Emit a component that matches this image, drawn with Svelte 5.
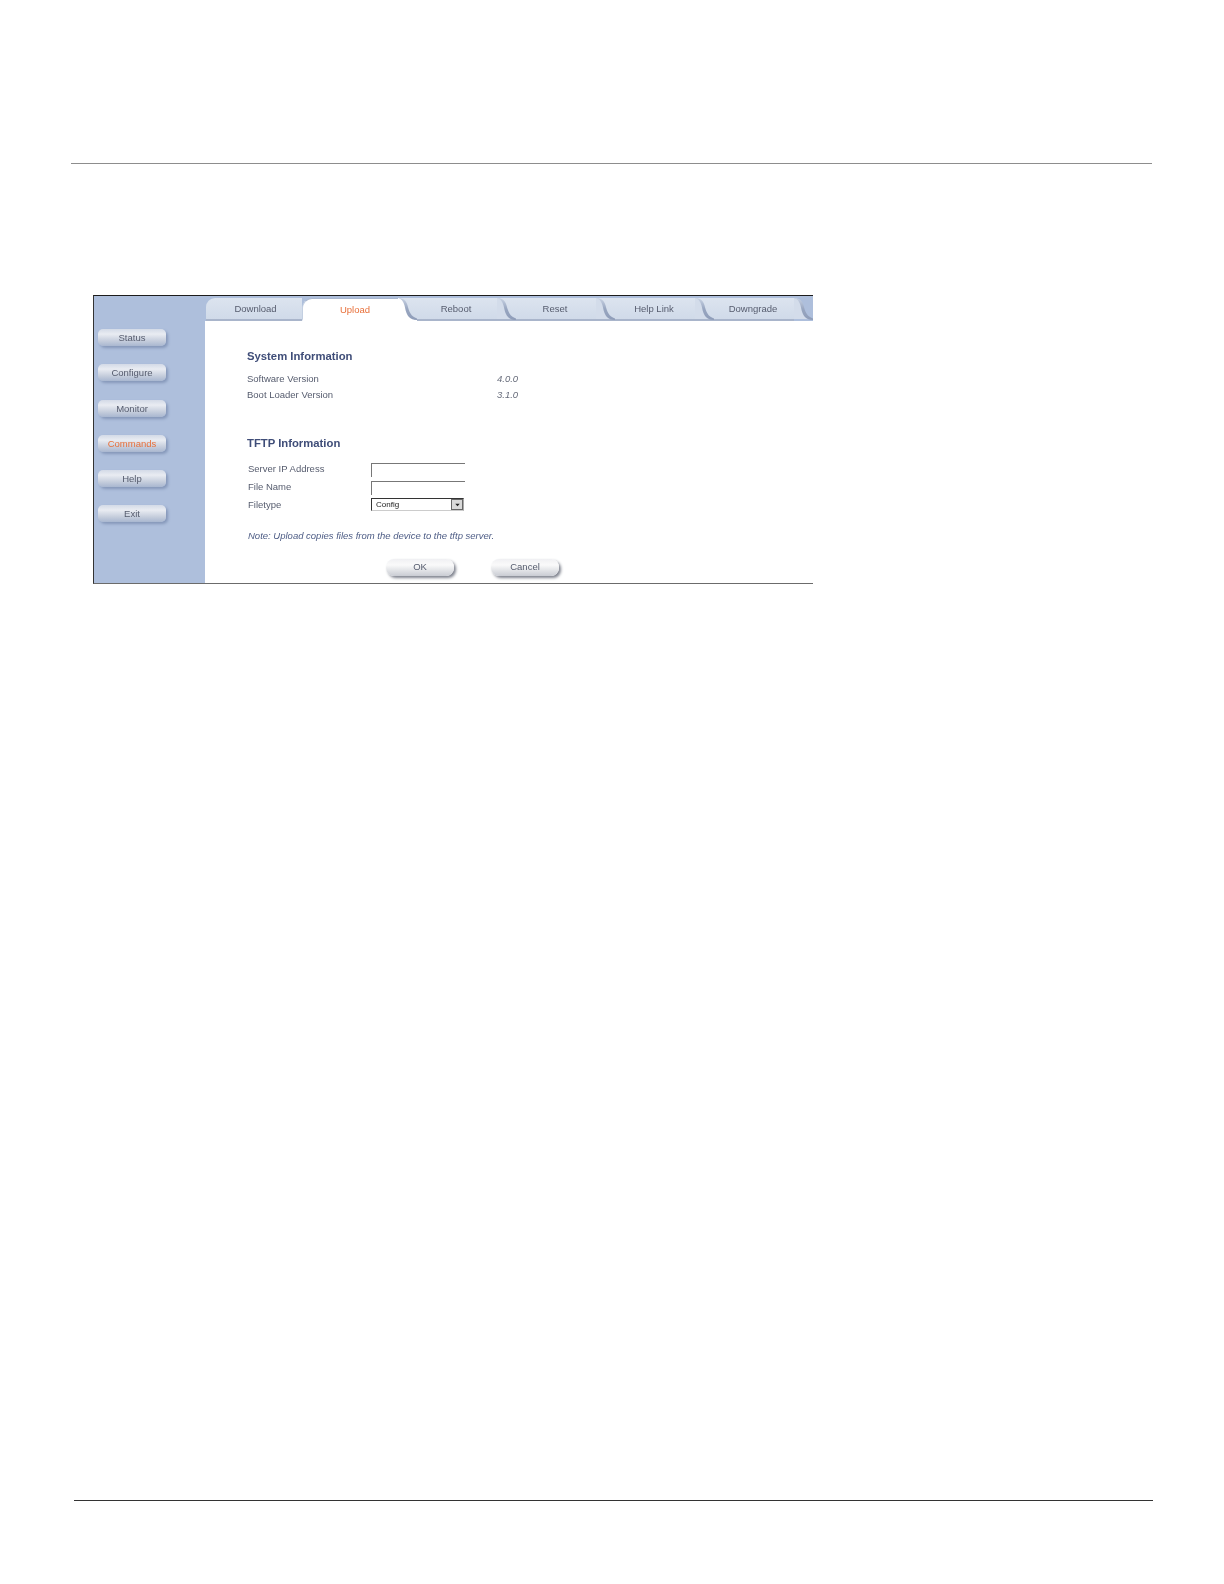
<script>
  const nav = ['Status', 'Configure', 'Monitor', 'Commands', 'Help', 'Exit']
  const tabs = ['Download', 'Upload', 'Reboot', 'Reset', 'Help Link', 'Downgrade']
  const active = 'Upload'
  const current = 'Commands'
</script>

<div class="page">
  <hr class="top-rule" />

  <div class="shot">
    <aside class="side">
      {#each nav as item}
        <div class="nav-btn" class:on={item === current}>{item}</div>
      {/each}
    </aside>

    <main class="main">
      <div class="tabs">
        {#each tabs as tab, i}
          <div class="tab" class:on={tab === active} class:first={i === 0}>
            <span>{tab}</span>
            {#if i > 0}
              <svg class="swoosh" viewBox="0 0 19 22" width="19" height="23" preserveAspectRatio="none" aria-hidden="true">
                <defs>
                  <linearGradient id="sw{i}" x1="0" y1="0" x2="0" y2="1">
                    <stop offset="0" stop-color="#c9d3e4" />
                    <stop offset="0.5" stop-color="#98a6c0" />
                    <stop offset="1" stop-color="#8f9db9" />
                  </linearGradient>
                </defs>
                <path d={tab === active ? 'M0 0 C5 1 7 4 8 9 C9 15 12 20 19 21 L19 22 L0 22 Z' : 'M0 0 C5 1 7 4 8 9 C9 15 12 19 19 20 L0 20 Z'} fill={tab === active ? '#fff' : '#d3dcea'} />
                <path d="M0 0 C5 0 8 2 9.5 7 C11 13 13 18 19 19.5 L19 21 C12 21 8.5 17 7 9 C6 4 4 1 0 0 Z" fill="url(#sw{i})" />
              </svg>
            {/if}
          </div>
        {/each}
      </div>

      <div class="content">
        <h2>System Information</h2>
        <div class="info"><span>Software Version</span><em>4.0.0</em></div>
        <div class="info"><span>Boot Loader Version</span><em>3.1.0</em></div>

        <h2 class="tftp">TFTP Information</h2>
        <div class="field"><label for="ip">Server IP Address</label><input id="ip" /></div>
        <div class="field"><label for="fn">File Name</label><input id="fn" /></div>
        <div class="field">
          <span class="lbl">Filetype</span>
          <div class="select">
            <span>Config</span>
            <i class="arrow"><svg viewBox="0 0 8 8" width="7" height="7" aria-hidden="true"><path d="M1.5 3 L6.5 3 L4 6 Z" fill="#222" /></svg></i>
          </div>
        </div>

        <p class="note">Note: Upload copies files from the device to the tftp server.</p>

        <div class="actions">
          <div class="act">OK</div>
          <div class="act">Cancel</div>
        </div>
      </div>
    </main>
  </div>

  <hr class="bottom-rule" />
</div>

<style>
  :global(body) {
    margin: 0;
    background: #fff;
  }

  .page {
    width: 1224px;
    height: 1584px;
    padding-top: 163px;
    box-sizing: border-box;
    font-family: "Liberation Sans", Arial, sans-serif;
    font-size: 9.5px;
    color: #565c6e;
  }

  hr {
    border: 0;
    height: 1px;
    margin: 0;
  }

  .top-rule {
    width: 1081px;
    margin-left: 71px;
    background: #8d8d8d;
  }

  .bottom-rule {
    width: 1079px;
    margin-left: 74px;
    margin-top: 916px;
    background: #333;
  }

  .shot {
    display: flex;
    width: 720px;
    height: 289px;
    margin: 131px 0 0 93px;
    box-sizing: border-box;
    border-top: 1px solid #1c1c1c;
    border-left: 1px solid #333;
    border-bottom: 1px solid #6b6b6b;
    overflow: hidden;
    filter: blur(0.4px);
  }

  .side {
    width: 111px;
    flex: none;
    padding: 33px 0 0 4px;
    box-sizing: border-box;
    background: #aebfdc;
  }

  .nav-btn {
    width: 68px;
    height: 17px;
    margin-bottom: 18.3px;
    line-height: 17px;
    text-align: center;
    border-radius: 5px;
    background: linear-gradient(#d3dae7, #e9ecf2 30%, #c5cddc 70%, #a9b7d0);
    box-shadow: 2px 2px 3px #8597b9;
  }

  .nav-btn.on {
    color: #e8703a;
  }

  .main {
    flex: 1;
    min-width: 0;
    display: flex;
    flex-direction: column;
    background: #fff;
  }

  .tabs {
    display: flex;
    height: 25px;
    padding: 2px 0 0 1px;
    box-sizing: border-box;
    background: #aebfdc;
    flex: none;
  }

  .tab {
    position: relative;
    width: 99px;
    flex: none;
    height: 23px;
    line-height: 22px;
    text-align: center;
    background: linear-gradient(#dce4ef, #d0dae9);
    border-bottom: 2px solid #a9b5cb;
    box-sizing: border-box;
    padding-left: 17px;
  }

  .tab.first {
    border-top-left-radius: 9px;
    width: 96px;
    padding-left: 3px;
  }

  .tab.on {
    z-index: 2;
    width: 96px;
    padding-left: 9px;
    background: #fff;
    border-top: 1px solid #a9b7cf;
    border-left: 1px solid #c3cfe1;
    border-bottom-color: #fff;
    border-top-left-radius: 10px;
    color: #e8703a;
    line-height: 21px;
  }

  .swoosh {
    position: absolute;
    top: 0;
    right: -19px;
    z-index: 1;
  }

  .tab.on .swoosh {
    top: -1px;
  }

  .content {
    padding: 27px 0 0 42px;
  }

  h2 {
    margin: 0 0 7px;
    font-size: 11.3px;
    line-height: 16px;
    font-weight: bold;
    color: #3f4d78;
  }

  h2.tftp {
    margin: 33px 0 9px;
  }

  .info {
    display: flex;
    height: 15.5px;
    line-height: 15.5px;
  }

  .info span {
    width: 250px;
  }

  .info em {
    color: #666b7a;
  }

  .field {
    display: flex;
    height: 18px;
    line-height: 18px;
    margin-left: 1px;
  }

  .field label,
  .lbl {
    width: 123px;
  }

  input {
    width: 94px;
    height: 14px;
    margin-top: 3px;
    padding: 0;
    box-sizing: border-box;
    background: #fff;
    border: 0;
    border-top: 1px solid #777;
    border-left: 1px solid #777;
    outline: none;
  }

  .select {
    display: flex;
    align-items: center;
    justify-content: space-between;
    width: 93px;
    height: 13px;
    margin-top: 2px;
    box-sizing: border-box;
    padding-left: 4px;
    border-top: 1px solid #333;
    border-left: 1px solid #333;
    border-bottom: 1px solid #ccc;
    border-right: 1px solid #aaa;
    font-size: 8px;
    line-height: 11px;
    color: #222;
  }

  .arrow {
    display: flex;
    align-items: center;
    justify-content: center;
    width: 12px;
    height: 11px;
    background: #d9d9d9;
    border: 1px solid #666;
    box-sizing: border-box;
  }

  .note {
    margin: 15px 0 0 1px;
    line-height: 14px;
    font-style: italic;
    color: #4d5c85;
  }

  .actions {
    display: flex;
    gap: 37px;
    margin: 16px 0 0 139px;
  }

  .act {
    width: 68px;
    height: 17px;
    line-height: 16px;
    text-align: center;
    border-radius: 8px;
    background: linear-gradient(#f0f0f3, #fafafa 35%, #c9ccd3);
    box-shadow: 2px 2px 3px #7f838e;
  }
</style>
